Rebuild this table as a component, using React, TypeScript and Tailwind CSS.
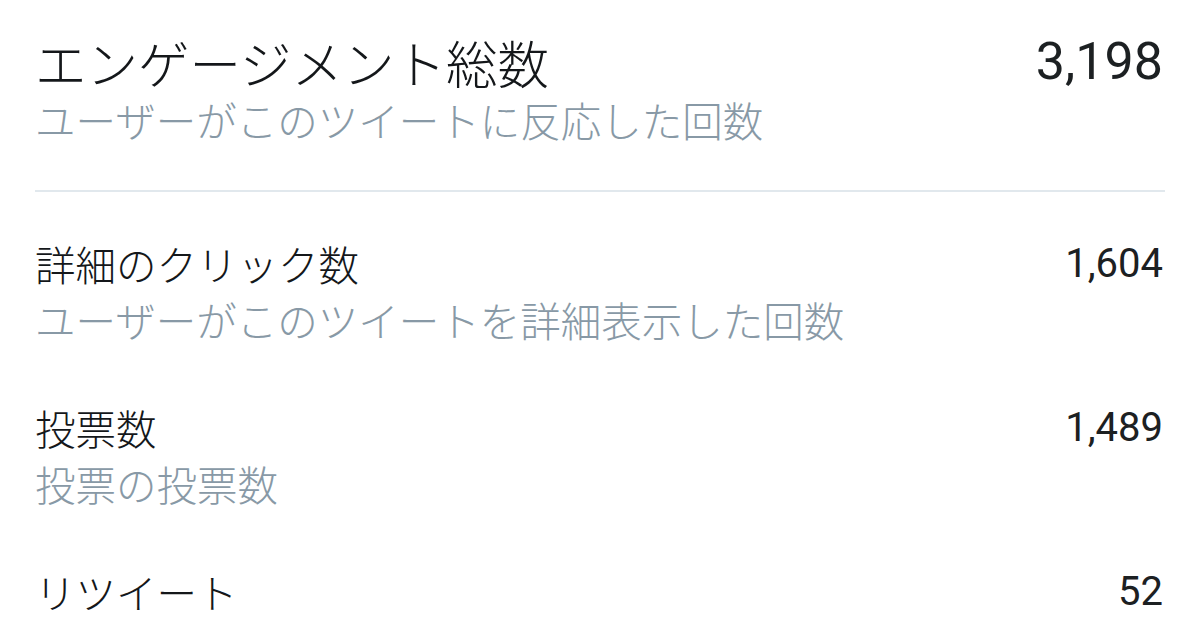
import React from "react";

type Row = { title: string; value: string; sub: string };

const rows: Row[] = [
  { title: "詳細のクリック数", value: "1,604", sub: "ユーザーがこのツイートを詳細表示した回数" },
  { title: "投票数", value: "1,489", sub: "投票の投票数" },
  { title: "リツイート", value: "52", sub: "ユーザーがこのツイートをリツイートした回数" },
];

export default function App() {
  return (
    <div className="w-[1200px] h-[630px] overflow-hidden bg-white px-[35px] pt-[32px] font-['Noto_Sans_CJK_JP','Noto_Sans',sans-serif]">
      <div>
        <div className="flex items-center justify-between h-[60px]">
          <span className="text-[51.5px] leading-[60px] text-[#14171a] font-light">
            エンゲージメント総数
          </span>
          <span className="text-[52px] leading-[60px] text-[#1c2022] pr-[2px] font-['Roboto','Liberation_Sans',sans-serif]">
            3,198
          </span>
        </div>
        <div className="text-[40.5px] leading-[56px] text-[#8899a6] font-light">
          ユーザーがこのツイートに反応した回数
        </div>
      </div>
      <div className="mt-[42px] h-[2px] bg-[#e1e8ed]" />
      <div className="flex flex-col gap-[52px] pt-[44px]">
        {rows.map((r) => (
          <div key={r.title}>
            <div className="flex items-center justify-between h-[56px]">
              <span className="text-[40.5px] leading-[56px] text-[#14171a] font-light">
                {r.title}
              </span>
              <span className="text-[40px] leading-[56px] text-[#1c2022] pr-[2px] font-['Roboto','Liberation_Sans',sans-serif]">
                {r.value}
              </span>
            </div>
            <div className="text-[40.5px] leading-[56px] text-[#8899a6] font-light">
              {r.sub}
            </div>
          </div>
        ))}
      </div>
    </div>
  );
}
